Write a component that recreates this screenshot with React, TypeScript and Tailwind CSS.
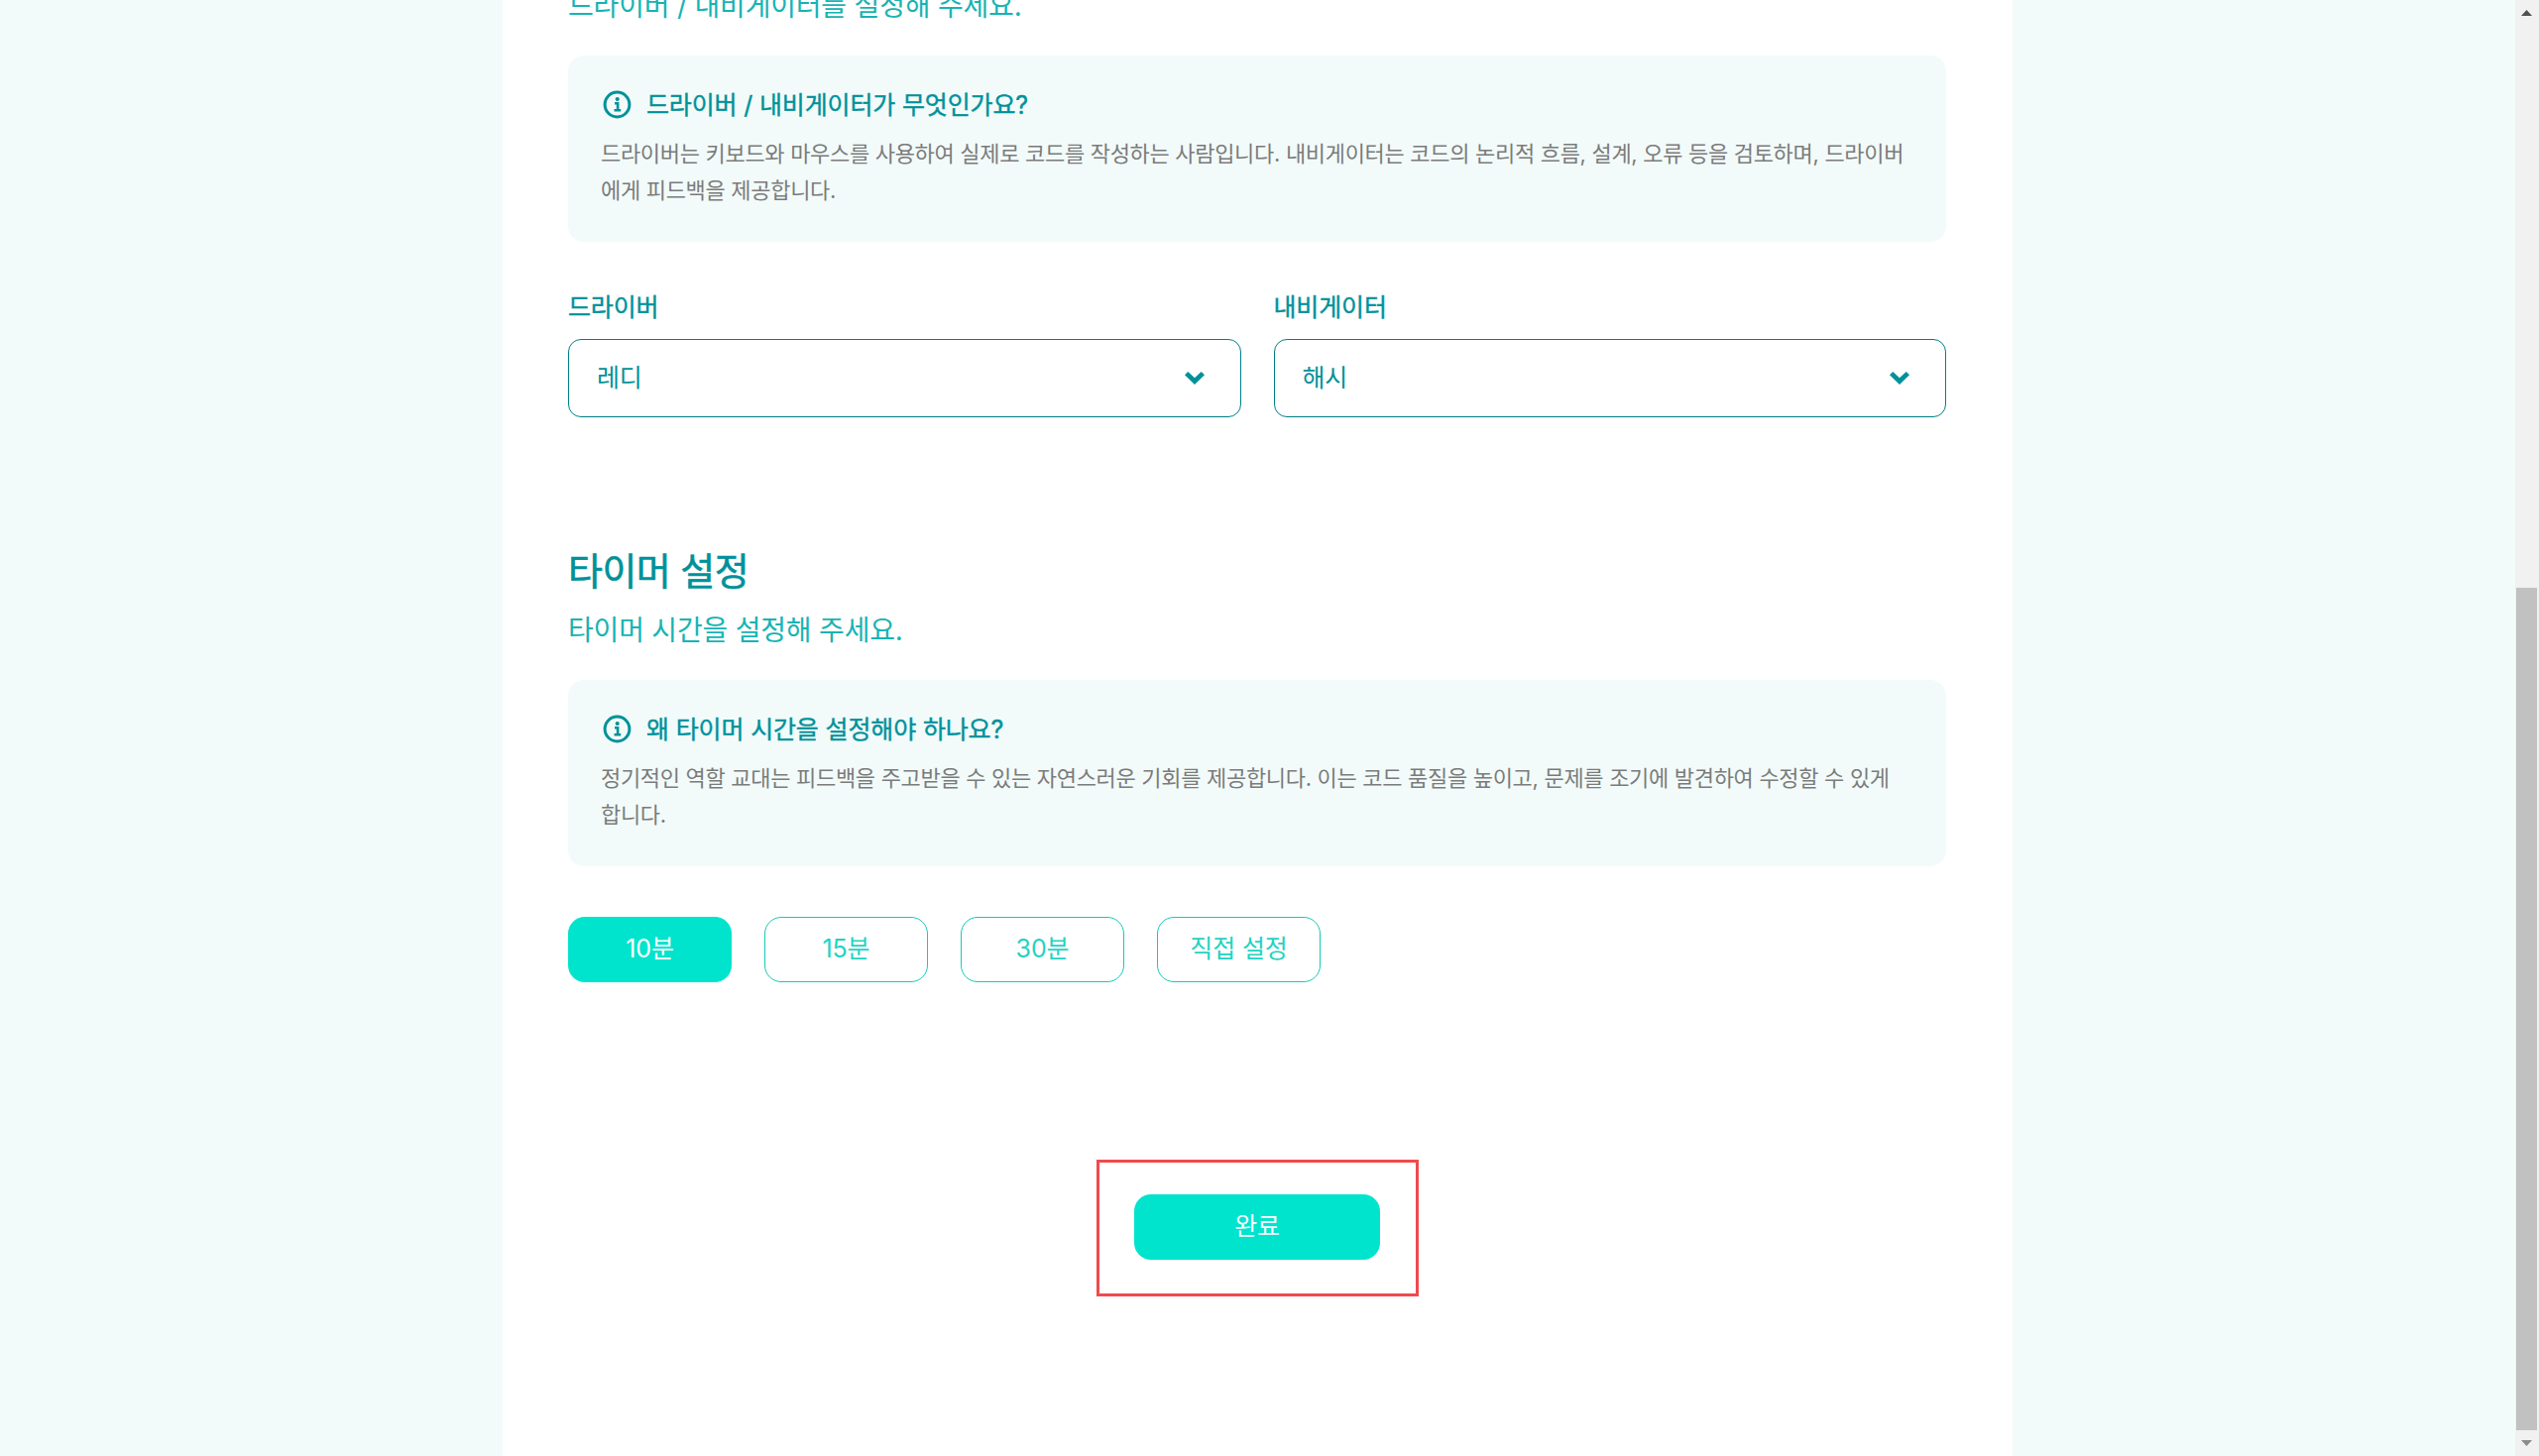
import type { ReactNode } from "react";

const InfoIcon = () => (
  <svg className="size-[33px] shrink-0" viewBox="0 0 33 33" fill="none" stroke="#00919a">
    <circle cx="16.5" cy="16.5" r="12.4" strokeWidth="3" />
    <circle cx="16.7" cy="11" r="2.1" fill="#00919a" stroke="none" />
    <path d="M14 15.2H17.1V22.2M13.5 22.2H20.2" strokeWidth="2.6" />
  </svg>
);

const Chevron = () => (
  <svg className="h-[13px] w-[20px] shrink-0" viewBox="0 0 20 13">
    <path d="M0 3.3L3.3 0L10 6.3L16.7 0L20 3.3L10 13Z" fill="#00919a" />
  </svg>
);

const Info = ({ title, children }: { title: string; children: ReactNode }) => (
  <div className="h-[188px] w-full shrink-0 rounded-[16px] bg-[#f2fbfa] px-[33px] pt-[29px]">
    <div className="flex h-[40px] items-center gap-[13px]">
      <InfoIcon />
      <h3 className="pt-px text-[25px] leading-[40px] tracking-[-0.006em] whitespace-nowrap text-[#00919a] [-webkit-text-stroke:0.4px_#00919a]">{title}</h3>
    </div>
    <p className="mt-[12px] text-[22px] leading-[37px] tracking-[-0.014em] whitespace-nowrap text-[#7b7b7b]">{children}</p>
  </div>
);

const Select = ({ label, value }: { label: string; value: string }) => (
  <div className="flex-1">
    <div className="text-[25px] leading-[40px] tracking-[-0.006em] text-[#00919a] [-webkit-text-stroke:0.4px_#00919a]">{label}</div>
    <div className="mt-[12px] flex h-[79px] items-center justify-between rounded-[13px] border border-[#007f87] pr-[36px] pl-[28px]">
      <span className="text-[25px] tracking-[-0.006em] text-[#00919a]">{value}</span>
      <Chevron />
    </div>
  </div>
);

const times = ["10분", "15분", "30분", "직접 설정"];

export default function App() {
  return (
    <div className="flex h-[1469px] w-[2561px] overflow-hidden bg-[#f2fbfa] font-['Inter','Noto_Sans_CJK_KR',sans-serif]">
      <div className="flex flex-1 justify-center">
        <main className="flex w-[1523px] flex-col bg-white pr-[67px] pl-[66px]">
          <p className="-mt-[19px] text-[28px] leading-[50px] tracking-[-0.007em] text-[#17b3b3]">드라이버 / 내비게이터를 설정해 주세요.</p>
          <div className="mt-[25px]">
            <Info title="드라이버 / 내비게이터가 무엇인가요?">
              드라이버는 키보드와 마우스를 사용하여 실제로 코드를 작성하는 사람입니다. 내비게이터는 코드의 논리적 흐름, 설계, 오류 등을 검토하며, 드라이버
              <br />
              에게 피드백을 제공합니다.
            </Info>
          </div>
          <div className="mt-[46px] flex gap-[33px]">
            <Select label="드라이버" value="레디" />
            <Select label="내비게이터" value="해시" />
          </div>
          <h2 className="mt-[125px] text-[38px] leading-[60px] tracking-[-0.015em] text-[#00919a] [-webkit-text-stroke:0.6px_#00919a]">타이머 설정</h2>
          <p className="mt-[5px] text-[28px] leading-[50px] tracking-[-0.007em] text-[#17b3b3]">타이머 시간을 설정해 주세요.</p>
          <div className="mt-[25px]">
            <Info title="왜 타이머 시간을 설정해야 하나요?">
              정기적인 역할 교대는 피드백을 주고받을 수 있는 자연스러운 기회를 제공합니다. 이는 코드 품질을 높이고, 문제를 조기에 발견하여 수정할 수 있게
              <br />
              합니다.
            </Info>
          </div>
          <div className="mt-[51px] flex gap-[33px]">
            {times.map((t, i) => (
              <button
                key={t}
                className={
                  i === 0
                    ? "h-[66px] w-[165px] rounded-[17px] bg-[#00e4cd] text-[25px] tracking-[-0.005em] text-white"
                    : "h-[66px] w-[165px] rounded-[17px] border border-[#17c9b9] text-[25px] tracking-[-0.005em] text-[#1fd3c3]"
                }
              >
                {t}
              </button>
            ))}
          </div>
          <div className="mt-[179px] ml-[533px] h-[138px] w-[325px] border-[3px] border-[#f04a4f] pt-[32px] pl-[35px]">
            <button className="h-[66px] w-[248px] rounded-[17px] bg-[#00e4cd] text-[25px] tracking-[-0.01em] text-white">완료</button>
          </div>
        </main>
      </div>
      <div className="flex w-[24px] flex-col bg-[#f1f1f1] pl-px">
        <svg className="mt-[10px] ml-[5px] h-[6px] w-[11px]" viewBox="0 0 12 6" preserveAspectRatio="none"><path d="M0 6L6 0L12 6Z" fill="#505050" /></svg>
        <div className="mt-[577px] w-[21px] flex-1 bg-[#c1c1c1]" />
        <svg className="mt-[10px] mb-[10px] ml-[5px] h-[6px] w-[11px]" viewBox="0 0 12 6" preserveAspectRatio="none"><path d="M0 0L6 6L12 0Z" fill="#8c8c8c" /></svg>
      </div>
    </div>
  );
}
